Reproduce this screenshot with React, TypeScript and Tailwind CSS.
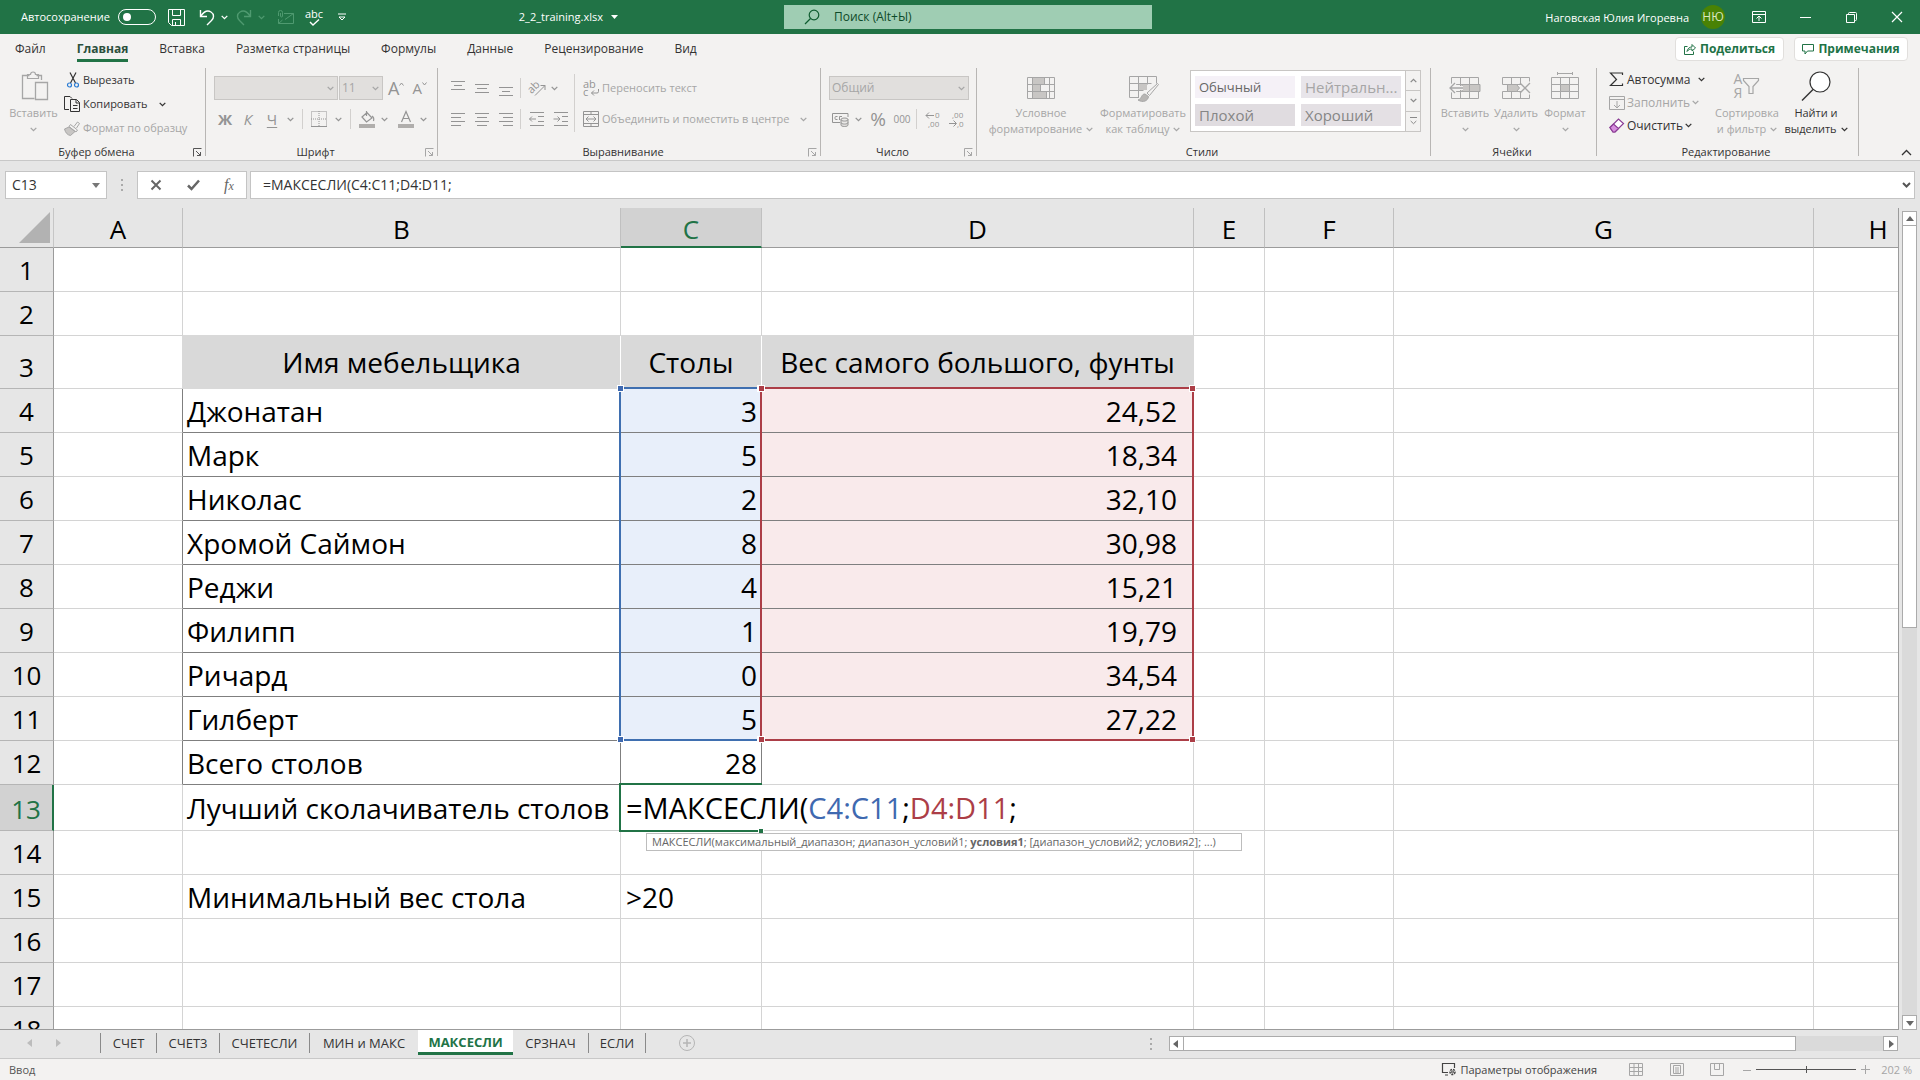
import React from "react";

type P = { children?: React.ReactNode; className?: string };

const Svg = ({ w, h, children, className = "" }: P & { w: number; h: number }) => (
  <svg width={w} height={h} viewBox={`0 0 ${w} ${h}`} fill="none" stroke="currentColor" strokeWidth="1" className={`shrink-0 overflow-visible ${className}`} aria-hidden="true">
    {children}
  </svg>
);

const Chev = ({ className = "" }: P) => (
  <Svg w={7} h={5} className={className}>
    <path d="M0.7 0.9 3.5 3.7 6.3 0.9" strokeWidth="1.3" />
  </Svg>
);

const Tri = ({ dir, className = "" }: P & { dir: "up" | "down" | "left" | "right" }) => {
  const d = { up: "M0 6 4 1 8 6Z", down: "M0 2 4 7 8 2Z", left: "M6 0 1 4 6 8Z", right: "M2 0 7 4 2 8Z" }[dir];
  return (
    <Svg w={8} h={8} className={className}>
      <path d={d} fill="currentColor" stroke="none" />
    </Svg>
  );
};

const Launcher = ({ className = "text-[#a6a6a6]" }: P) => (
  <button aria-label="Параметры группы" className={className}>
    <Svg w={9} h={9}>
      <path d="M0.5 8.5V0.5H8.5M3 3 7.5 7.5M7.5 4V7.5H4" />
    </Svg>
  </button>
);

function Group({ width, label, launcher, children }: P & { width: string; label: string; launcher?: string }) {
  return (
    <section aria-label={label} className={`flex shrink-0 items-start ${width}`}>
      <div className="flex min-w-0 flex-1 flex-col">
        <div className="h-[76px]">{children}</div>
        <div className="flex h-4 items-center pr-[3px] leading-4">
          <span className="flex-1 text-center">{label}</span>
          {launcher && <Launcher className={launcher} />}
        </div>
      </div>
      <div className="h-[88px] w-px bg-[#b8b6b4]" />
    </section>
  );
}

const Sep = ({ className = "h-5" }: P) => <div className={`w-px shrink-0 bg-[#d2d0ce] ${className}`} />;

function Big({ width, icon, lines, on, chevronBelow }: { width: string; icon: React.ReactNode; lines: string[]; on?: boolean; chevronBelow?: boolean }) {
  return (
    <button className={`flex shrink-0 flex-col items-center pt-[2px] leading-4 whitespace-nowrap ${width} ${on ? "text-[#333]" : "text-[#a6a6a6]"}`}>
      <span className="mb-[3px] flex h-8 items-center justify-center">{icon}</span>
      {lines.map((l, i) => (
        <span key={l} className="flex items-center gap-1">
          {l}
          {!chevronBelow && i === lines.length - 1 && <Chev />}
        </span>
      ))}
      {chevronBelow && (
        <span className="flex h-4 items-center">
          <Chev />
        </span>
      )}
    </button>
  );
}

const lineSets: Record<string, number[][]> = {
  top: [[1, 1, 15], [4, 5, 12], [1, 9, 15]],
  mid: [[1, 4, 15], [3, 8, 13], [1, 12, 15]],
  bottom: [[1, 7, 15], [4, 11, 12], [1, 15, 15]],
  left: [[1, 2, 15], [1, 6, 11], [1, 10, 15], [1, 14, 11]],
  center: [[1, 2, 15], [3, 6, 13], [1, 10, 15], [3, 14, 13]],
  right: [[1, 2, 15], [5, 6, 15], [1, 10, 15], [5, 14, 15]],
};
const AlignIcon = ({ kind }: { kind: string }) => (
  <Svg w={16} h={17}>
    {lineSets[kind].map(([a, y, b]) => (
      <path key={y} d={`M${a} ${y + 0.5}H${b}`} />
    ))}
  </Svg>
);

const AlignButton = ({ kind, label }: { kind: string; label: string }) => (
  <button aria-label={label} className="flex w-6 shrink-0 justify-center">
    <AlignIcon kind={kind} />
  </button>
);

const GridIcon = ({ children }: P) => (
  <Svg w={32} h={28}>
    <path d="M2.5 5.5h27v21h-27zM2.5 12.5h27M2.5 19.5h27M11.5 5.5v21M20.5 5.5v21" />
    {children}
  </Svg>
);

function TitleBar() {
  return (
    <header className="grid h-[34px] grid-cols-[49fr_23fr_48fr] items-center bg-[#217346] text-[11px] text-white">
      <div className="flex items-center">
        <label className="flex items-center pl-[21px]">
          <span className="w-[97px]">Автосохранение</span>
          <input type="checkbox" role="switch" className="peer sr-only" />
          <span className="flex h-4 w-[38px] items-center rounded-full border border-white pl-1">
            <span className="size-2 rounded-full bg-white" />
          </span>
        </label>
        <button aria-label="Сохранить" className="ml-3">
          <Svg w={17} h={17}>
            <path d="M0.5 0.5h16v16h-13l-3-3zM4.5 0.5v6h8v-6M4.5 16.5v-6h8v6M7.5 13v3.5" />
          </Svg>
        </button>
        <button aria-label="Отменить" className="ml-[14px] flex items-center gap-[6px]">
          <Svg w={16} h={17}>
            <path d="M1.5 1v6.5H8M1.8 7.2C5 2.5 9 1.2 12 3c3.5 2.200 3 6 0.5 8.500L8 16" strokeWidth="1.4" />
          </Svg>
          <Chev />
        </button>
        <button aria-label="Вернуть" className="ml-2 flex items-center gap-[6px] text-[#4f9a70]">
          <Svg w={16} h={17}>
            <path d="M14.5 1v6.5H8M14.2 7.200C11 2.5 7 1.200 4 3c-3.5 2.200-3 6-0.5 8.500L8 16" strokeWidth="1.4" />
          </Svg>
          <Chev />
        </button>
        <button aria-label="Отправить" className="ml-3 text-[#4f9a70]">
          <Svg w={17} h={15}>
            <path d="M7 3.5h9.500v10h-15V9M8 9.500l8.500-6M1.5 13.500l4-3.5M1.5 6V2.500a2 2 0 0 1 4 0V6a1 1 0 0 1-2 0V3" />
          </Svg>
        </button>
        <button aria-label="Орфография" className="ml-3 flex w-4 flex-col items-center text-[11px] leading-[10px]">
          abc
          <Svg w={11} h={7}>
            <path d="M1 3 4 6 10 0.5" strokeWidth="1.4" />
          </Svg>
        </button>
        <button aria-label="Настройка панели" className="ml-4">
          <Svg w={8} h={8}>
            <path d="M0 1h8" />
            <path d="M1 4h6L4 7z" />
          </Svg>
        </button>
        <button className="mr-[166px] ml-auto flex items-center gap-2">
          2_2_training.xlsx
          <Svg w={7} h={4}>
            <path d="M0 0h7L3.5 4z" fill="currentColor" stroke="none" />
          </Svg>
        </button>
      </div>
      <label className="flex h-6 items-center bg-[#9fcdb3] pl-5 text-[12px] text-[#0e5c2f]">
        <Svg w={16} h={16}>
          <circle cx="10" cy="6" r="4.800" strokeWidth="1.200" />
          <path d="M6.5 9.500 1 15" strokeWidth="1.200" />
        </Svg>
        <input aria-label="Поиск" placeholder="Поиск (Alt+Ы)" className="ml-[14px] min-w-0 flex-1 bg-transparent outline-none placeholder:text-[#0e4a29]" />
      </label>
      <div className="flex items-center justify-end pr-[17px]">
        <span className="pt-[2px]">Наговская Юлия Игоревна</span>
        <button aria-label="Учётная запись" className="ml-3 size-6 rounded-full bg-[#498205] text-[12px] text-[#dbe8c2]">
          НЮ
        </button>
        <button aria-label="Параметры ленты" className="ml-[27px]">
          <Svg w={14} h={12}>
            <path d="M0.5 0.5h13v11h-13zM0.5 3.5h13M7 10V5M4.5 7.500 7 5l2.500 2.500" />
          </Svg>
        </button>
        <button aria-label="Свернуть" className="ml-[34px]">
          <Svg w={11} h={11}>
            <path d="M0 5.500h11" />
          </Svg>
        </button>
        <button aria-label="Восстановить" className="ml-[35px]">
          <Svg w={11} h={11}>
            <path d="M0.5 2.500h8v8h-8zM2.500 2.500v-1a1 1 0 0 1 1-1h6a1 1 0 0 1 1 1v6a1 1 0 0 1-1 1h-1" />
          </Svg>
        </button>
        <button aria-label="Закрыть" className="ml-[34px]">
          <Svg w={12} h={12}>
            <path d="M1 1l10 10M11 1 1 11" strokeWidth="1.200" />
          </Svg>
        </button>
      </div>
    </header>
  );
}

const menu = ["Файл", "Главная", "Вставка", "Разметка страницы", "Формулы", "Данные", "Рецензирование", "Вид"];

function MenuBar() {
  return (
    <div className="flex h-[34px] items-start justify-between pr-3 text-[12px]">
      <nav className="flex gap-[31px] pt-[7px] pl-[15px] leading-4">
        {menu.map((m) => (
          <button key={m} className={m === "Главная" ? "border-b-[3px] border-[#217346] pb-[2px] font-bold text-[#2b4f3c]" : "pb-[5px]"}>
            {m}
          </button>
        ))}
      </nav>
      <div className="flex gap-[10px] pt-[3px] font-bold text-[#217346]">
        <button className="flex h-6 w-[109px] items-center justify-center gap-1 rounded-sm border border-[#e1dfdd] bg-white">
          <Svg w={12} h={12}>
            <path d="M3.5 3.5h-3v8h9v-3M3 8.500C3.5 5.500 5.500 4 8 4V1.500L11.500 5 8 8V6C6 6 4.500 6.500 3 8.500z" />
          </Svg>
          Поделиться
        </button>
        <button className="flex h-6 w-[114px] items-center justify-center gap-1 rounded-sm border border-[#e1dfdd] bg-white">
          <Svg w={12} h={12}>
            <path d="M0.5 1.500h11v6.500h-6l-2.500 3v-3h-2.500z" />
          </Svg>
          Примечания
        </button>
      </div>
    </div>
  );
}

function Picker({ width, value, label }: { width: string; value: string; label: string }) {
  return (
    <span className={`relative flex shrink-0 ${width}`}>
      <select aria-label={label} disabled className="h-6 w-full appearance-none border border-[#c8c6c4] bg-[#e1dfdd] pl-[2px] text-[12px] text-[#a6a6a6] opacity-100">
        <option>{value}</option>
      </select>
      <Chev className="absolute top-[10px] right-1 text-[#a6a6a6]" />
    </span>
  );
}

const swatches = [
  ["Обычный", "bg-[#f5f1f7] text-[#666] text-[13px]"],
  ["Нейтральн...", "bg-[#e8e5ea] text-[#a6a6a6]"],
  ["Плохой", "bg-[#e0dce0] text-[#868686]"],
  ["Хороший", "bg-[#e4e0e4] text-[#868686]"],
];

function Ribbon() {
  return (
    <div className="flex h-[92px] overflow-hidden text-[11px]">
      <Group width="w-[206px]" label="Буфер обмена" launcher="text-[#555]">
        <div className="flex">
          <Big
            width="w-[67px]"
            chevronBelow
            lines={["Вставить"]}
            icon={
              <Svg w={26} h={32}>
                <path d="M8.500 5.500h-7v23h12M20.500 10V5.500h-5" strokeWidth="1.300" />
                <path d="M6.500 8.500v-4h3a2.500 2.500 0 0 1 5 0h3v4z" strokeWidth="1.200" />
                <path d="M14.500 12.500h12v17h-12z" strokeWidth="1.300" />
              </Svg>
            }
          />
          <div className="flex flex-col whitespace-nowrap">
            <button className="flex h-6 items-center gap-1">
              <Svg w={12} h={16}>
                <path d="M3 0.5 8.500 11M9 0.5 3.5 11" strokeWidth="1.200" />
                <circle cx="2.500" cy="13" r="2" stroke="#2b7cd3" strokeWidth="1.200" />
                <circle cx="9.500" cy="13" r="2" stroke="#2b7cd3" strokeWidth="1.200" />
              </Svg>
              Вырезать
            </button>
            <button className="-ml-[3px] flex h-6 items-center gap-[3px]">
              <Svg w={16} h={16}>
                <path d="M5 13.500H0.5V0.5h5.500l2 2M6.500 3.5h6l3 3v9h-9zM12 3.5v3.5h3.500M9 9.500h4.500M9 12.500h4.500" />
              </Svg>
              Копировать
              <Chev className="ml-2" />
            </button>
            <button className="-ml-[3px] flex h-6 items-center gap-[3px] text-[#a6a6a6]">
              <Svg w={16} h={15}>
                <path d="M10 5.500 13.500 1l2 1.500L12.500 7M6.500 3.5l7 5.500-1.500 2L5 5.500z" />
                <path d="M5 6 0.5 8c1 4 3 6 6 6.500l4.500-4z" fill="#c8c6c4" />
              </Svg>
              Формат по образцу
            </button>
          </div>
        </div>
      </Group>

      <Group width="w-[232px]" label="Шрифт" launcher="text-[#a6a6a6]">
        <div className="flex flex-col gap-[7px] pt-2 pl-2 text-[#949494]">
          <div className="flex h-6 items-center">
            <Picker width="w-[124px]" value="" label="Шрифт" />
            <span className="w-px" />
            <Picker width="w-[44px]" value="11" label="Размер шрифта" />
            <button aria-label="Увеличить размер" className="ml-[5px] flex items-start text-[18px] leading-5">
              A<Svg w={5} h={4} className="mt-1"><path d="M0.5 3.5 2.500 1 4.500 3.5" /></Svg>
            </button>
            <button aria-label="Уменьшить размер" className="ml-2 flex items-start text-[15px] leading-5">
              A<Svg w={5} h={4} className="mt-1"><path d="M0.5 0.5 2.500 3 4.500 0.5" /></Svg>
            </button>
          </div>
          <div className="flex h-6 items-center text-[15px]">
            <button className="w-[22px] font-bold">Ж</button>
            <button className="w-6 italic">К</button>
            <button className="w-6 underline underline-offset-2">Ч</button>
            <Chev className="ml-[3px]" />
            <Sep className="ml-2 h-5" />
            <button aria-label="Границы" className="ml-2">
              <Svg w={16} h={16}>
                <path d="M0.5 0.5h15v15h-15zM8 0v16M0 8h16" strokeDasharray="1 1" />
                <path d="M0 15.500h16" />
              </Svg>
            </button>
            <Chev className="ml-2" />
            <Sep className="ml-2 h-5" />
            <button aria-label="Цвет заливки" className="ml-2">
              <Svg w={16} h={18}>
                <path d="M7.500 1v5M3 7l5-4.500L13 8l-5.500 4zM13 6c2 1 2 3 1.500 5" strokeWidth="1.200" />
                <path d="M0 14h16v4H0z" fill="#b0aeac" stroke="none" />
              </Svg>
            </button>
            <Chev className="ml-[6px]" />
            <button aria-label="Цвет текста" className="ml-[10px]">
              <Svg w={16} h={18}>
                <path d="M3.5 12 8 1.500 12.500 12M5 8.500h6" strokeWidth="1.200" />
                <path d="M0 14h16v4H0z" fill="#b0aeac" stroke="none" />
              </Svg>
            </button>
            <Chev className="ml-[6px]" />
          </div>
        </div>
      </Group>

      <Group width="w-[383px]" label="Выравнивание" launcher="text-[#a6a6a6]">
        <div className="flex pt-[6px] pl-2 text-[#949494]">
          <div className="flex flex-col gap-[7px] pt-[2px]">
            <div className="flex h-6 items-center">
              <AlignButton kind="top" label="По верхнему краю" />
              <AlignButton kind="mid" label="По середине" />
              <AlignButton kind="bottom" label="По нижнему краю" />
              <Sep className="ml-[2px] h-5" />
              <button aria-label="Ориентация" className="ml-2 flex items-center gap-[5px]">
                <Svg w={17} h={17}>
                  <text x="-1" y="10" fontSize="11" fill="currentColor" stroke="none" transform="rotate(-45 6 8)">ab</text>
                  <path d="M6 15.500 16 5.500M11.500 5.500H16V10" />
                </Svg>
                <Chev />
              </button>
            </div>
            <div className="flex h-6 items-center">
              <AlignButton kind="left" label="По левому краю" />
              <AlignButton kind="center" label="По центру" />
              <AlignButton kind="right" label="По правому краю" />
              <Sep className="ml-[2px] h-5" />
              <button aria-label="Уменьшить отступ" className="ml-2">
                <Svg w={16} h={14}>
                  <path d="M1 0.5h14M9 4.500h6M9 9.500h6M1 13.500h14M0.5 7H7M3 4.500 0.5 7 3 9.500" />
                </Svg>
              </button>
              <button aria-label="Увеличить отступ" className="ml-2">
                <Svg w={16} h={14}>
                  <path d="M1 0.5h14M9 4.500h6M9 9.500h6M1 13.500h14M0.5 7H7M4.500 4.500 7 7 4.500 9.500" />
                </Svg>
              </button>
            </div>
          </div>
          <Sep className="ml-[5px] h-[58px]" />
          <div className="flex flex-col gap-[7px] pt-[2px] pl-2 whitespace-nowrap text-[#a6a6a6]">
            <button className="flex h-6 items-center gap-[3px]">
              <span className="relative flex w-4 flex-col text-left text-[11px] leading-[8px] text-[#949494]">
                <span>ab</span>
                <span>c</span>
                <Svg w={8} h={7} className="absolute right-0 bottom-0">
                  <path d="M7.500 0v2.500a1.500 1.500 0 0 1-1.500 1.500H0.5M3 1.500 0.5 4 3 6.500" />
                </Svg>
              </span>
              Переносить текст
            </button>
            <button className="flex h-6 items-center gap-[3px]">
              <Svg w={16} h={16} className="text-[#949494]">
                <path d="M0.5 0.5h15v15h-15zM0.5 3.5h15M0.5 12.500h15M8 0.5v3M8 12.500v3M3 8h10M5.500 5.500 3 8l2.500 2.500M10.500 5.500 13 8l-2.500 2.500" />
              </Svg>
              Объединить и поместить в центре
              <Chev className="ml-2" />
            </button>
          </div>
        </div>
      </Group>

      <Group width="w-[156px]" label="Число" launcher="text-[#a6a6a6]">
        <div className="flex flex-col gap-[7px] pt-2 pl-2 text-[#949494]">
          <Picker width="w-[140px]" value="Общий" label="Числовой формат" />
          <div className="flex h-6 items-center pl-[3px]">
            <button aria-label="Финансовый формат" className="flex items-center gap-[6px]">
              <Svg w={17} h={16}>
                <path d="M8 11.500H0.5v-9h15.500V6M5.500 5.500H4a1 1 0 0 0-1 1v1a1 1 0 0 0 1 1h1.500M7.500 9V5.500h2.500" />
                <path d="M9 8.500c0-2 7-2 7 0v5.500c0 2-7 2-7 0zM9 8.500c0 2 7 2 7 0M9 11.500c0 2 7 2 7 0" fill="#e1dfdd" />
              </Svg>
              <Chev />
            </button>
            <button className="ml-[6px] w-5 text-[19px] leading-6">%</button>
            <button className="ml-1 w-5 text-[10px]">000</button>
            <Sep className="ml-1 h-5" />
            <button aria-label="Увеличить разрядность" className="ml-2">
              <Svg w={16} h={16}>
                <path d="M1 4.500h8M4 1.500 1 4.500l3 3" />
                <text x="10" y="7" fontSize="8" fill="currentColor" stroke="none">0</text>
                <text x="3" y="16" fontSize="8" fill="currentColor" stroke="none">,00</text>
              </Svg>
            </button>
            <button aria-label="Уменьшить разрядность" className="ml-2">
              <Svg w={16} h={16}>
                <path d="M0 12.500h7M4.500 9.500l3 3-3 3" />
                <text x="3" y="7" fontSize="8" fill="currentColor" stroke="none">,00</text>
                <text x="8" y="16" fontSize="8" fill="currentColor" stroke="none">,0</text>
              </Svg>
            </button>
          </div>
        </div>
      </Group>

      <Group width="w-[454px]" label="Стили">
        <div className="flex">
          <Big
            width="w-[128px]"
            lines={["Условное", "форматирование"]}
            icon={
              <Svg w={28} h={28}>
                <path d="M6 6h11v6H6zM6 13h7v6H6zM6 20h13v6H6z" fill="#c8c6c4" stroke="none" />
                <path d="M0.5 5.500h27v21h-27zM0.5 12.500h27M0.5 19.500h27M5.500 5.500v21M17.500 5.500v7M22.500 5.500v21M13.500 12.500v7M19.500 19.500v7" />
              </Svg>
            }
          />
          <Big
            width="w-[76px]"
            lines={["Форматировать", "как таблицу"]}
            icon={
              <Svg w={32} h={32}>
                <path d="M2.500 6.500h27v7M2.500 6.500v21H12M2.500 13.500h22M2.500 20.500h14M11.500 6.500v21M20.500 6.500v8" />
                <path d="M12 14h8v6h-8z" fill="#c8c6c4" stroke="none" />
                <path d="M30.500 13.500 20 23l2.500 2.500 9-11z" fill="#f3f2f1" />
                <path d="M18 24c-4 0-3 5-7 6 5 3 10 1 10.500-3.500z" fill="#b8b6b4" />
              </Svg>
            }
          />
          <div className="mt-[2px] ml-[9px] flex h-[62px] w-[231px] border border-[#c8c6c4] bg-white">
            <div className="grid flex-1 grid-cols-2 gap-[6px] px-1 py-[5px] text-[15px] leading-[22px]">
              {swatches.map(([n, c]) => (
                <button key={n} className={`h-[22px] pl-1 text-left whitespace-nowrap ${c}`}>
                  {n}
                </button>
              ))}
            </div>
            <div className="flex w-[15px] flex-col divide-y divide-[#c8c6c4] border-l border-[#c8c6c4] bg-[#f3f2f1] text-[#8a8a8a]">
              <button aria-label="Вверх" className="flex flex-1 items-center justify-center"><Chev className="rotate-180" /></button>
              <button aria-label="Вниз" className="flex flex-1 items-center justify-center"><Chev /></button>
              <button aria-label="Ещё" className="flex flex-1 items-center justify-center">
                <Svg w={7} h={8}><path d="M0 0.5h7M0.7 4 3.5 6.700 6.300 4" /></Svg>
              </button>
            </div>
          </div>
        </div>
      </Group>

      <Group width="w-[166px]" label="Ячейки">
        <div className="flex pl-2">
          <Big
            width="w-[52px]"
            chevronBelow
            lines={["Вставить"]}
            icon={
              <GridIcon>
                <path d="M13 12.500h18v7H13z" fill="#c8c6c4" />
                <path d="M20.500 12.500v7" />
                <path d="M1 16h13M6 11l-5 5 5 5" stroke="#f3f2f1" strokeWidth="4" />
                <path d="M1 16h13M6 11l-5 5 5 5" strokeWidth="1.300" />
              </GridIcon>
            }
          />
          <Big
            width="w-[50px]"
            chevronBelow
            lines={["Удалить"]}
            icon={
              <Svg w={32} h={28}>
                <path d="M2.500 12.500v-7h27v4M2.500 12.500h19M2.500 26.500v-7h19M2.500 26.500h27v-4M11.500 5.500v7M20.500 5.500v7M11.500 19.500v7M20.500 19.500v7" />
                <path d="M7.500 12.500h9l3 3.5-3 3.5h-9z" fill="#c8c6c4" />
                <path d="M20 11l10 10M30 11 20 21" strokeWidth="1.300" />
              </Svg>
            }
          />
          <Big
            width="w-[48px]"
            chevronBelow
            lines={["Формат"]}
            icon={
              <GridIcon>
                <path d="M11.500 12.500h9v7h-9z" fill="#c8c6c4" />
                <path d="M8.500 0v3M23.500 0v3M8.500 1.500h15" />
              </GridIcon>
            }
          />
        </div>
      </Group>

      <Group width="w-[262px]" label="Редактирование">
        <div className="flex pl-3">
          <div className="flex w-[102px] flex-col text-[12px] whitespace-nowrap">
            <button className="flex h-[23px] items-center gap-[3px]">
              <Svg w={15} h={15}>
                <path d="M13.500 3V1H1.500l6 6.500-6 6h12v-2" strokeWidth="1.200" />
              </Svg>
              Автосумма
              <Chev className="ml-[5px]" />
            </button>
            <button className="flex h-[23px] items-center gap-[2px] text-[#a6a6a6]">
              <Svg w={16} h={14}>
                <path d="M0.5 0.5h15v13h-15zM0.5 3.5h15M8 5v7M5 9l3 3 3-3" />
              </Svg>
              Заполнить
              <Chev />
            </button>
            <button className="flex h-[23px] items-center gap-[2px]">
              <Svg w={16} h={15}>
                <path d="M1 9.500 9.500 1l5 4.500L6 14H4z" fill="#fff" stroke="#8a3c94" strokeWidth="1.200" />
                <path d="M1 9.500 4.500 6l5 4.500L6 14H4z" fill="#d68ede" stroke="#8a3c94" strokeWidth="1.200" />
              </Svg>
              Очистить
              <Chev />
            </button>
          </div>
          <Big
            width="w-[72px]"
            lines={["Сортировка", "и фильтр"]}
            icon={
              <span className="flex items-center">
                <span className="flex flex-col text-[14px] leading-[14px]">
                  <span>А</span>
                  <span>Я</span>
                </span>
                <Svg w={18} h={18}>
                  <path d="M1.500 1.500h15v2l-5.500 6v7l-4 0V9.500l-5.500-6z" strokeWidth="1.200" />
                </Svg>
              </span>
            }
          />
          <Big
            width="w-[66px]"
            on
            lines={["Найти и", "выделить"]}
            icon={
              <Svg w={30} h={30}>
                <circle cx="19" cy="11" r="10" fill="#fff" strokeWidth="1.200" />
                <path d="M12 18.500 1 29.500" strokeWidth="1.400" />
              </Svg>
            }
          />
        </div>
      </Group>
      <div className="flex flex-1 items-end justify-end pr-2 pb-1">
        <button aria-label="Свернуть ленту">
          <Svg w={11} h={7}>
            <path d="M1 6 5.500 1.500 10 6" strokeWidth="1.300" />
          </Svg>
        </button>
      </div>
    </div>
  );
}

function FormulaBar() {
  return (
    <div className="flex h-12 items-start border-t border-[#c8c8c8] px-[5px] pt-[10px]">
      <div className="flex h-7 w-[102px] items-center border border-[#c4c4c4] bg-white pr-[6px]">
        <input aria-label="Имя" defaultValue="C13" className="min-w-0 flex-1 pl-[6px] text-[14px] outline-none" />
        <button aria-label="Список имён" className="text-[#777]"><Tri dir="down" /></button>
      </div>
      <div className="flex h-7 w-[30px] flex-col items-center justify-center gap-[3px]">
        <span className="size-[2px] bg-[#aaa]" />
        <span className="size-[2px] bg-[#aaa]" />
        <span className="size-[2px] bg-[#aaa]" />
      </div>
      <div className="flex h-7 w-[110px] items-center justify-around border border-[#c4c4c4] bg-white text-[#666]">
        <button aria-label="Отмена"><Svg w={12} h={12}><path d="M1.500 1.500l9 9M10.500 1.500l-9 9" strokeWidth="2" /></Svg></button>
        <button aria-label="Ввод"><Svg w={13} h={12}><path d="M1 6.500 4.500 10 12 1.500" strokeWidth="2.500" /></Svg></button>
        <button aria-label="Вставить функцию" className="font-['Liberation_Serif',serif] text-[16px] italic">
          f<span className="text-[12px]">x</span>
        </button>
      </div>
      <div className="ml-[3px] flex h-7 flex-1 items-center border border-[#c4c4c4] bg-white pr-[3px]">
        <input aria-label="Строка формул" defaultValue="=МАКСЕСЛИ(C4:C11;D4:D11;" className="min-w-0 flex-1 pl-3 text-[14px] outline-none" />
        <button aria-label="Развернуть" className="text-[#555]">
          <Svg w={9} h={6}><path d="M1 1 4.500 4.500 8 1" strokeWidth="2" /></Svg>
        </button>
      </div>
    </div>
  );
}

const cols: [string, string][] = [
  ["A", "w-[129px]"],
  ["B", "w-[438px]"],
  ["C", "w-[141px]"],
  ["D", "w-[432px]"],
  ["E", "w-[71px]"],
  ["F", "w-[129px]"],
  ["G", "w-[420px]"],
  ["H", "w-[129px]"],
];

const cells: Record<string, string> = {
  B3: "Имя мебельщика", C3: "Столы", D3: "Вес самого большого, фунты",
  B4: "Джонатан", C4: "3", D4: "24,52",
  B5: "Марк", C5: "5", D5: "18,34",
  B6: "Николас", C6: "2", D6: "32,10",
  B7: "Хромой Саймон", C7: "8", D7: "30,98",
  B8: "Реджи", C8: "4", D8: "15,21",
  B9: "Филипп", C9: "1", D9: "19,79",
  B10: "Ричард", C10: "0", D10: "34,54",
  B11: "Гилберт", C11: "5", D11: "27,22",
  B12: "Всего столов", C12: "28",
  B13: "Лучший сколачиватель столов",
  B15: "Минимальный вес стола", C15: ">20",
};

function cellClass(c: string, r: number) {
  const out = ["border-r border-b p-0 whitespace-nowrap"];
  const inTable = "BCD".includes(c);
  if (r === 3 && inTable) {
    out.push("bg-[#d9d9d9] text-center border-b-[#d9d9d9]", c === "D" ? "border-r-[#d9d9d9]" : "border-r-white");
    return out.join(" ");
  }
  if (r === 2 && inTable) out.push("border-b-[#d9d9d9]");
  else if (r >= 4 && r <= 11 && inTable) out.push("border-b-[#7f7f7f]");
  else if (r === 12 && (c === "B" || c === "C")) out.push("border-b-[#7f7f7f]");
  else out.push("border-b-[#d4d4d4]");

  if (c === "A" && r >= 4 && r <= 12) out.push("border-r-[#7f7f7f]");
  else if (c === "A" && r === 3) out.push("border-r-[#d9d9d9]");
  else if (inTable && c !== "D" && r >= 4 && r <= 12) out.push("border-r-[#7f7f7f]");
  else if (c === "C" && r === 13) out.push("border-r-transparent");
  else out.push("border-r-[#d4d4d4]");

  if (r >= 4 && r <= 11 && c === "C") out.push("bg-[#e8effa]");
  if (r >= 4 && r <= 11 && c === "D") out.push("bg-[#f9eaeb]");
  if (c === "C" && r >= 4 && r <= 12) out.push("text-right pr-[4px]");
  else if (c === "D" && r >= 4) out.push("text-right pr-4");
  else if (c === "C") out.push("pl-[5px]");
  else out.push("pl-1");
  if ((c === "C" || c === "D") && r === 4) out.push("relative");
  if (c === "C" && r === 13) out.push("relative");
  return out.join(" ");
}

function RangeBox({ box, knob }: { box: string; knob: string }) {
  return (
    <span className={`pointer-events-none absolute -top-[2px] -left-[2px] z-10 h-[354px] border-2 ${box}`}>
      <span className={`absolute -top-[4px] -left-[4px] size-[7px] border border-white ${knob}`} />
      <span className={`absolute -top-[4px] -right-[4px] size-[7px] border border-white ${knob}`} />
      <span className={`absolute -bottom-[4px] -left-[4px] size-[7px] border border-white ${knob}`} />
      <span className={`absolute -right-[4px] -bottom-[4px] size-[7px] border border-white ${knob}`} />
    </span>
  );
}

function EditCell() {
  return (
    <>
      <span className="pointer-events-none absolute -top-[2px] -bottom-[2px] -left-[2px] z-10 w-[143px] border-y-2 border-l-2 border-[#217346]">
        <span className="absolute -right-[2px] -bottom-[4px] size-[6px] border border-white bg-[#217346]" />
      </span>
      <span className="relative z-10 text-[29px]">
        =МАКСЕСЛИ(<span className="text-[#3f69b0]">C4:C11</span>;<span className="text-[#ac3e47]">D4:D11</span>;
      </span>
      <span role="tooltip" className="absolute top-[48px] left-[25px] z-20 flex h-[18px] w-[596px] items-center border border-[#bdbdbd] bg-white px-[5px] text-[11px] leading-4 text-[#666]">
        <span>
          МАКСЕСЛИ(максимальный_диапазон; диапазон_условий1; <b>условия1</b>; [диапазон_условий2; условия2]; ...)
        </span>
      </span>
    </>
  );
}

function Sheet() {
  return (
    <main className="flex min-h-0 flex-1">
      <div className="relative min-w-0 flex-1 overflow-hidden border-r border-b border-[#9b9b9b]">
        <table className="w-[1943px] table-fixed border-separate border-spacing-0 bg-white text-[28px] leading-8 text-black">
          <thead>
            <tr className="h-10 bg-[#e6e6e6] text-[26px]">
              <th className="w-[54px] border-r border-b border-r-[#c6c6c6] border-b-[#9b9b9b] p-0">
                <button aria-label="Выделить всё" className="flex w-full justify-end pr-[3px]">
                  <Svg w={31} h={31}><path d="M31 0V31H0z" fill="#b2b2b2" stroke="none" /></Svg>
                </button>
              </th>
              {cols.map(([c, w]) => (
                <th key={c} scope="col" className={`border-r border-r-[#c0c0c0] p-0 pt-[3px] font-normal ${w} ${c === "C" ? "border-b-2 border-b-[#217346] bg-[#d2d2d2] text-[#217346]" : "border-b border-b-[#9b9b9b]"}`}>
                  {c}
                </th>
              ))}
            </tr>
          </thead>
          <tbody>
            {Array.from({ length: 18 }, (_, i) => i + 1).map((r) => (
              <tr key={r} className={r === 3 ? "h-[53px]" : r === 13 ? "h-[46px]" : "h-11"}>
                <th scope="row" className={`border-b border-b-[#b5b5b5] p-0 align-bottom text-[26px] leading-[42px] font-normal ${r === 13 ? "border-r-2 border-r-[#217346] bg-[#d2d2d2] text-[#217346]" : "border-r border-r-[#9b9b9b] bg-[#e6e6e6]"}`}>
                  {r}
                </th>
                {cols.map(([c]) => (
                  <td key={c} className={cellClass(c, r)}>
                    {cells[c + r]}
                    {c + r === "C4" && <RangeBox box="w-[143px] border-[#3f6fb0]" knob="bg-[#3f69b0]" />}
                    {c + r === "D4" && <RangeBox box="w-[434px] border-[#ac3e47]" knob="bg-[#ac3e47]" />}
                    {c + r === "C13" && <EditCell />}
                  </td>
                ))}
              </tr>
            ))}
          </tbody>
        </table>
      </div>
      <div className="flex w-[21px] flex-col px-[3px] pt-[3px]">
        <button aria-label="Вверх" className="flex h-[15px] items-center justify-center border border-[#ababab] bg-white text-[#666]"><Tri dir="up" /></button>
        <div className="flex-1 bg-[#dadada]">
          <div className="h-[51%] border border-t-0 border-[#ababab] bg-white" />
        </div>
        <button aria-label="Вниз" className="flex h-[15px] items-center justify-center border border-[#ababab] bg-white text-[#666]"><Tri dir="down" /></button>
      </div>
    </main>
  );
}

const tabs: [string, string][] = [
  ["СЧЕТ", "w-[56px]"],
  ["СЧЕТ3", "w-[63px]"],
  ["СЧЕТЕСЛИ", "w-[90px]"],
  ["МИН и МАКС", "w-[109px]"],
  ["МАКСЕСЛИ", "w-[95px]"],
  ["СРЗНАЧ", "w-[76px]"],
  ["ЕСЛИ", "w-[57px]"],
];

function TabBar() {
  return (
    <div className="flex h-[29px] border-b border-[#c8c8c8]">
      <div className="flex w-[100px] items-center gap-5 pb-[2px] pl-[26px] text-[#bcbcbc]">
        <button aria-label="Назад"><Tri dir="left" /></button>
        <button aria-label="Вперёд"><Tri dir="right" /></button>
      </div>
      <div className="flex items-start text-[13px] leading-5">
        {tabs.map(([t, w], i) => (
          <button
            key={t}
            className={`shrink-0 ${w} ${t === "МАКСЕСЛИ" ? "-mt-px h-[26px] border-b-[3px] border-[#217346] bg-white pt-[3px] font-bold text-[#217346]" : `mt-[3px] h-5 ${i > 4 ? "border-r border-[#8a8a8a]" : "border-l border-[#8a8a8a]"}`}`}
          >
            {t}
          </button>
        ))}
      </div>
      <button aria-label="Новый лист" className="mb-[2px] ml-[33px] text-[#b5b5b5]">
        <Svg w={16} h={16}><path d="M8 4v8M4 8h8" strokeWidth="1.500" /><circle cx="8" cy="8" r="7.500" /></Svg>
      </button>
      <div className="ml-auto flex w-[41%] items-center pr-[22px] pb-[1px]">
        <div className="flex w-[36px] flex-col items-center gap-[3px]">
          <span className="size-[2px] bg-[#aaa]" />
          <span className="size-[2px] bg-[#aaa]" />
          <span className="size-[2px] bg-[#aaa]" />
        </div>
        <button aria-label="Влево" className="flex h-[15px] w-[15px] items-center justify-center border border-[#ababab] bg-white text-[#666]"><Tri dir="left" /></button>
        <div className="flex h-[15px] flex-1 bg-[#dadada]">
          <div className="w-7/8 border border-l-0 border-[#ababab] bg-white" />
        </div>
        <button aria-label="Вправо" className="flex h-[15px] w-[15px] items-center justify-center border border-[#ababab] bg-white text-[#666]"><Tri dir="right" /></button>
      </div>
    </div>
  );
}

function StatusBar() {
  return (
    <footer className="flex h-[21px] items-center bg-[#f3f2f1] pr-2 pl-[9px] text-[11px] text-[#555]">
      <span>Ввод</span>
      <div className="ml-auto flex items-center text-[#a6a6a6]">
        <button className="flex items-center gap-[3px] text-[#444]">
          <Svg w={15} h={13}>
            <path d="M6 9.500H0.5v-9h12V5M3 12h3" strokeWidth="1.200" />
            <circle cx="10.500" cy="9" r="2.500" strokeWidth="1.500" strokeDasharray="2 1" />
            <circle cx="10.500" cy="9" r="1" />
          </Svg>
          Параметры отображения
        </button>
        <button aria-label="Обычный" className="ml-8"><Svg w={14} h={13}><path d="M0.5 0.5h13v12h-13zM0.5 4.500h13M0.5 8.500h13M5 0.5v12M9.500 0.5v12" /></Svg></button>
        <button aria-label="Разметка страницы" className="ml-[27px]"><Svg w={14} h={13}><path d="M0.5 0.5h13v12h-13zM3.5 2.500h7v8h-7zM5 5h4M5 7h4M5 9h4" /></Svg></button>
        <button aria-label="Страничный режим" className="ml-[26px]"><Svg w={14} h={13}><path d="M0.5 0.5h13v12h-13zM4.500 0.5v6h5v-6M9.500 0.5v6" /></Svg></button>
        <button aria-label="Уменьшить масштаб" className="ml-[19px]"><Svg w={8} h={8}><path d="M0 4.500h8" /></Svg></button>
        <input
          type="range"
          aria-label="Масштаб"
          defaultValue={50}
          className="mx-[5px] h-2 w-[100px] appearance-none bg-[linear-gradient(#555,#555)] bg-[length:100%_1px] bg-center bg-no-repeat [&::-webkit-slider-thumb]:h-[7px] [&::-webkit-slider-thumb]:w-px [&::-webkit-slider-thumb]:appearance-none [&::-webkit-slider-thumb]:bg-[#555]"
        />
        <button aria-label="Увеличить масштаб"><Svg w={9} h={9}><path d="M0 4.500h9M4.500 0v9" /></Svg></button>
        <span className="w-[42px] text-right whitespace-nowrap">202 %</span>
      </div>
    </footer>
  );
}

export default function App() {
  return (
    <div className="flex h-screen flex-col overflow-hidden bg-[#e6e6e6] font-['Open_Sans','Noto_Sans',sans-serif] text-[12px] leading-4 text-[#333]">
      <TitleBar />
      <div className="bg-[#f3f2f1]">
        <MenuBar />
        <Ribbon />
      </div>
      <FormulaBar />
      <Sheet />
      <TabBar />
      <StatusBar />
    </div>
  );
}
